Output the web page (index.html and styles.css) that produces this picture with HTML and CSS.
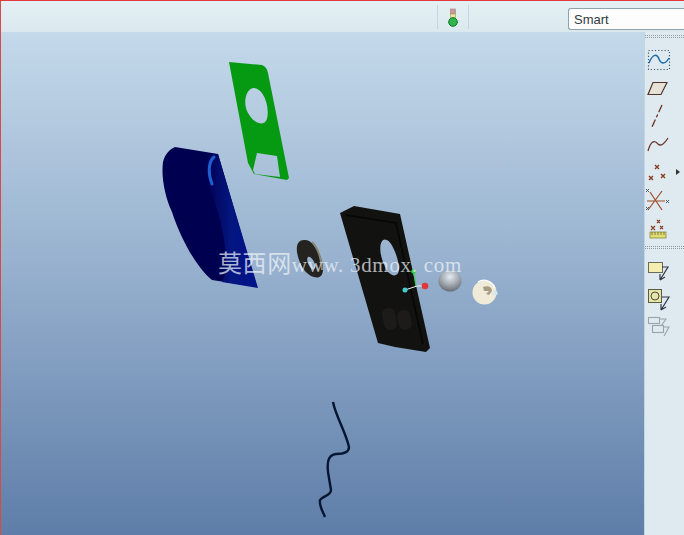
FILE: index.html
```html
<!DOCTYPE html>
<html lang="zh">
<head>
<meta charset="utf-8">
<title>CAD</title>
<link rel="stylesheet" href="styles.css">
</head>
<body>
<div class="app">
  <header class="toolbar">
    <div class="status-cell">
      <svg class="icon-light" viewBox="0 0 12 20" width="12" height="20">
        <rect x="3.500" y="1" width="5" height="5" fill="#c99a9a" stroke="#a08080" stroke-width=".6"/>
        <rect x="3.500" y="6" width="5" height="5" fill="#e6e69a" stroke="#a0a060" stroke-width=".6"/>
        <circle cx="6" cy="14" r="4.300" fill="#2fb84a" stroke="#12702a" stroke-width="1"/>
      </svg>
    </div>
    <div class="filter-box">Smart</div>
  </header>
  <main class="workspace">
    <div class="viewport">
      <svg class="scene" viewBox="0 0 644 503" width="644" height="503">
        <defs>
          <linearGradient id="blueEdge" x1="0" y1="0" x2="1" y2="0">
            <stop offset="0" stop-color="#000050"/>
            <stop offset=".5" stop-color="#041680"/>
            <stop offset="1" stop-color="#00128a"/>
          </linearGradient>
          <radialGradient id="ball" cx=".5" cy=".3" r=".7">
            <stop offset="0" stop-color="#e4eaf0"/>
            <stop offset=".5" stop-color="#a8afb6"/>
            <stop offset="1" stop-color="#666d76"/>
          </radialGradient>
        </defs>
        <!-- green plate -->
        <path fill-rule="evenodd" fill="#069a12" d="M229 30 L262 33 Q267 35 268 41 L289 146 L287 148 L254 142 L248 131 Z M253 56 C245 58 243 72 248 81 C254 92 264 95 267 87 C270 75 264 56 253 56 Z M257 121 L253 138 L255 142 L280 145 L277 124 Z"/>
        <!-- blue shell -->
        <path fill="#000050" d="M175 115 L218 122 L257 255 L212 248 C196 235 180 205 172 180 C165 165 161 145 163 130 C165 122 170 117 175 115 Z"/>
        <path fill="url(#blueEdge)" d="M205 123 L218 122 L258 256 L222 250 C232 235 222 190 213 165 C207 150 204 135 205 123 Z"/>
        <path fill="none" stroke="#1f5fd0" stroke-width="3" stroke-linecap="round" d="M214 125 C208 130 208 142 212 152"/>
        <!-- washer -->
        <path fill-rule="evenodd" fill="#25231f" d="M304 208 C311 207 319 217 322 230 C325 242 321 247 314 245 C306 243 299 233 297 220 C296 212 299 208 304 208 Z M308 225 C306 227 308 233 311 236 C314 239 316 236 315 232 C313 227 310 224 308 225 Z"/>
        <path fill="none" stroke="#8a8674" stroke-width="2" d="M312 210 C318 216 322 228 322 238"/>
        <!-- black part -->
        <path fill-rule="evenodd" fill="#121211" d="M340 181 L354 174 L400 182 L430 316 L426 320 L395 315 L378 311 Z M383 208 C378 212 380 228 388 240 C394 246 400 244 399 234 C397 222 390 204 383 208 Z"/>
        <rect x="383" y="276" width="13" height="22" rx="6" fill="#1d1b19" transform="rotate(-12 389 287)"/>
        <rect x="398" y="278" width="13" height="20" rx="6" fill="#1d1b19" transform="rotate(-12 404 288)"/>
        <path fill="none" stroke="#060606" stroke-width="1.500" d="M346 183 L396 191 L423 312"/>
        <!-- datum triad -->
        <path stroke="#e6f2f2" stroke-width="1" fill="none" d="M405 258 L417 254"/>
        <path stroke="#f0f0f0" stroke-width="1" fill="none" d="M417 254 L425 254"/>
        <path stroke="#3ad04a" stroke-width="1.200" fill="none" d="M416 254 L413.500 240"/>
        <circle cx="405" cy="258" r="2.500" fill="#3fd0d0"/>
        <circle cx="425" cy="254" r="3.300" fill="#e03838"/>
        <circle cx="413.500" cy="239.500" r="2.300" fill="#2fd040"/>
        <!-- ball -->
        <ellipse cx="450" cy="249" rx="11.500" ry="10.500" fill="url(#ball)"/>
        <!-- cap -->
        <circle cx="484.500" cy="260.500" r="12" fill="#f0ebd8"/>
        <path fill="none" stroke="#fff" stroke-width="1.400" d="M478 250 C484 246 492 249 495 256"/>
        <path fill="#a89d84" d="M483 255 C488 253 492 255 492 259 L489 263 L486 262 L489 259 L484 259 Z"/>
        <circle cx="495" cy="261" r="2.500" fill="#d7e6ee"/>
        <!-- curve -->
        <path fill="none" stroke="#071630" stroke-width="2.400" stroke-linejoin="round" d="M333 370 C336 385 345 398 349 415 C349 420 345 422 336 422 C328 423 327 430 328 440 L331 458 C331 464 322 464 320 468 C319 474 323 480 325 485"/>
      </svg>
      <div class="watermark"><span class="wm-cjk">莫西网</span>www. 3dmox. com</div>
    </div>
    <aside class="sidebar">
      <div class="grip"></div>
      <div class="tool-group">
        <button class="tool">
          <svg viewBox="0 0 28 24" width="28" height="24"><rect x="3.500" y="2.500" width="21" height="19" fill="none" stroke="#3a5a70" stroke-width="1.200" stroke-dasharray="1.200 2"/><path d="M4 15 C8 5 12 6 14 11 C16 16 20 17 24 10" fill="none" stroke="#1e6fa8" stroke-width="1.500"/></svg>
        </button>
        <button class="tool">
          <svg viewBox="0 0 28 24" width="28" height="24"><path d="M8 6.500 H22 L16 18.500 H3 Z" fill="#e6e2d8" stroke="#4f3428" stroke-width="1.200"/></svg>
        </button>
        <button class="tool">
          <svg viewBox="0 0 28 24" width="28" height="24"><path d="M17 1 L7 23" fill="none" stroke="#6a3020" stroke-width="1.300" stroke-dasharray="8 2.500 3 2.500"/></svg>
        </button>
        <button class="tool">
          <svg viewBox="0 0 28 24" width="28" height="24"><path d="M3 19 C6 8 10 8 13 12 C16 15 20 11 23 6" fill="none" stroke="#6a3a30" stroke-width="1.300"/></svg>
        </button>
        <button class="tool">
          <svg viewBox="0 0 28 24" width="28" height="24"><g fill="none" stroke="#8a3a20" stroke-width="1.400"><path d="M10 5 L14 9 M14 5 L10 9"/><path d="M4 16 L8 20 M8 16 L4 20"/><path d="M16 14 L20 18 M20 14 L16 18"/></g></svg>
          <span class="flyout"></span>
        </button>
        <button class="tool">
          <svg viewBox="0 0 28 24" width="28" height="24"><path d="M3 22 L17 3 M5 4 L17 22 M2 13 L20 13" fill="none" stroke="#a04a28" stroke-width="1.200"/><path d="M1 1 L4 4 M4 1 L1 4 M21 12 L24 15 M24 12 L21 15 M1 19 L4 22 M4 19 L1 22" fill="none" stroke="#505a60" stroke-width="1"/></svg>
        </button>
        <button class="tool">
          <svg viewBox="0 0 28 24" width="28" height="24"><path d="M6 10 L10 14 M10 10 L6 14 M12 4 L15 7 M15 4 L12 7 M15 10 L18 13 M18 10 L15 13" fill="none" stroke="#8a3a20" stroke-width="1.200"/><rect x="5" y="16" width="16" height="6" fill="#e0dc70" stroke="#8a8a40" stroke-width=".8"/><path d="M7 16 V19 M10 16 V19 M13 16 V19 M16 16 V19 M19 16 V19" stroke="#5a5a30" stroke-width=".7"/></svg>
        </button>
      </div>
      <div class="grip grip-mid"></div>
      <div class="tool-group tool-group-low">
        <button class="tool">
          <svg viewBox="0 0 28 24" width="28" height="24"><rect x="3.500" y="6.500" width="14" height="10" fill="#f4efb0" stroke="#6a6a58" stroke-width="1"/><path d="M17 11 H23 L15 24 M15 24 L15 18 M15 24 L20 21" fill="none" stroke="#303848" stroke-width="1.200"/></svg>
        </button>
        <button class="tool">
          <svg viewBox="0 0 28 24" width="28" height="24"><rect x="3.500" y="5.500" width="13" height="13" fill="#e6e6aa" stroke="#5a5a40" stroke-width="1"/><circle cx="10" cy="12" r="4" fill="none" stroke="#4a4a40" stroke-width="1"/><path d="M17 13 H24 L16 26 M16 26 L16 20 M16 26 L21 23" fill="none" stroke="#303848" stroke-width="1.200"/></svg>
        </button>
        <button class="tool">
          <svg viewBox="0 0 28 24" width="28" height="24"><g fill="none" stroke="#9aa2aa" stroke-width="1.100"><rect x="3.500" y="5.500" width="11" height="6"/><rect x="7.500" y="13.500" width="11" height="7"/><path d="M15 7 H21 L16 14 M19 15 H24 L19 24"/></g></svg>
        </button>
      </div>
    </aside>
  </main>
</div>
</body>
</html>
```

FILE: styles.css
```css
* { box-sizing: border-box; }
html, body { margin: 0; height: 100%; overflow: hidden; }
body { font-family: "Liberation Sans", Arial, sans-serif; }

.app {
  width: 684px;
  height: 535px;
  display: flex;
  flex-direction: column;
  border-top: 1px solid #e23a3a;
  border-left: 1px solid #d84a4a;
  overflow: hidden;
}

.toolbar {
  height: 31px;
  flex: none;
  display: flex;
  align-items: flex-start;
  padding: 7px 0 0 436px;
  background: linear-gradient(#e4f0f3, #dbe9ee);
}
.status-cell {
  width: 32px;
  height: 24px;
  flex: none;
  margin-top: -3px;
  display: flex;
  justify-content: center;
  padding-top: 3px;
  padding-right: 1px;
  border-left: 1px solid #c8d6dc;
  border-right: 1px solid #c8d6dc;
}
.icon-light { display: block; }
.filter-box {
  margin-left: 99px;
  width: 130px;
  height: 22px;
  flex: none;
  padding: 3px 0 0 5px;
  font-size: 13px;
  line-height: 16px;
  color: #333a40;
  background: #fdfdfd;
  border: 1px solid #8ea3ad;
  border-right: 0;
  border-radius: 3px 0 0 3px;
}

.workspace { flex: 1; display: flex; min-height: 0; }

.viewport {
  position: relative;
  width: 643px;
  flex: none;
  background: linear-gradient(#c4d9ea 0, #98b2cf 45%, #5e7da8 100%);
}
.scene { position: absolute; left: -1px; top: 0; display: block; filter: blur(.35px); }
.watermark {
  position: absolute;
  left: 217px;
  top: 216px;
  font-family: "Liberation Serif", "Noto Sans CJK SC", serif;
  font-size: 21px;
  line-height: 32px;
  white-space: nowrap;
  color: rgba(240, 244, 248, .72);
  letter-spacing: .7px;
}
.wm-cjk { font-size: 24px; letter-spacing: .6px; }

.sidebar {
  width: 40px;
  flex: none;
  background: #dfeaf0;
  border-left: 1px solid #c4d5e2;
  display: flex;
  flex-direction: column;
  padding-top: 3px;
}
.grip {
  height: 3px;
  flex: none;
  border-top: 1px dotted #8f9aa2;
  border-bottom: 1px dotted #8f9aa2;
}
.grip-mid { margin: 6px 0 0; }
.tool-group { display: flex; flex-direction: column; gap: 4px; padding-top: 10px; }
.tool-group-low { padding-top: 7px; }
.tool {
  position: relative;
  width: 39px;
  height: 24px;
  padding: 0;
  border: 0;
  background: none;
  display: block;
  text-align: left;
}
.tool svg { display: block; overflow: visible; }
.flyout {
  position: absolute;
  right: 4px;
  top: 9px;
  border-left: 4px solid #333;
  border-top: 3px solid transparent;
  border-bottom: 3px solid transparent;
}
```
